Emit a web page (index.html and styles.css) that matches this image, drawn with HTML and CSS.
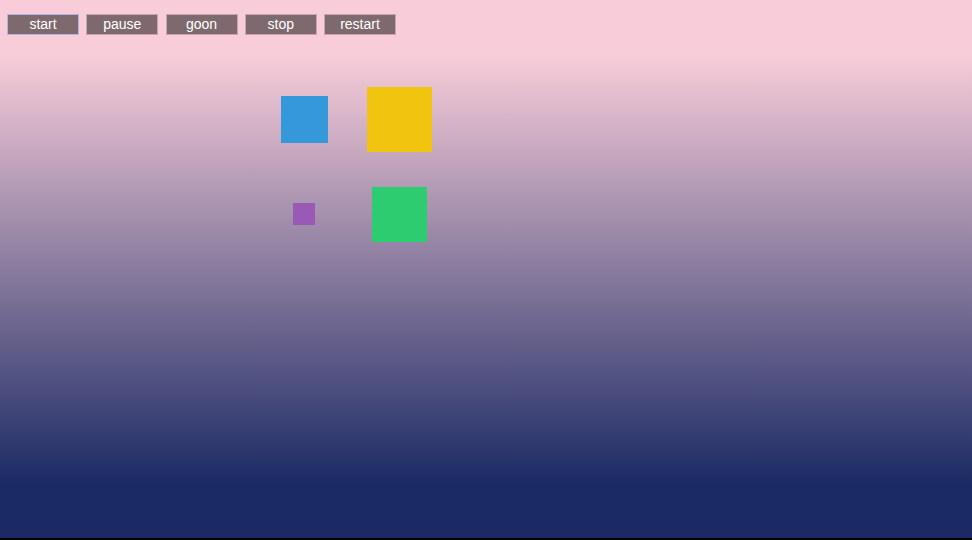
FILE: index.html
```html
<!DOCTYPE html>
<html>
<head>
<meta charset="utf-8">
<link rel="stylesheet" href="styles.css">
</head>
<body>
<div class="stage">
  <div class="controls">
    <button class="btn btn-focus">start</button>
    <button class="btn">pause</button>
    <button class="btn">goon</button>
    <button class="btn">stop</button>
    <button class="btn">restart</button>
  </div>
  <div class="grid">
    <div class="cell"><div class="box blue"></div></div>
    <div class="cell"><div class="box yellow"></div></div>
    <div class="cell"><div class="box purple"></div></div>
    <div class="cell"><div class="box green"></div></div>
  </div>
</div>
</body>
</html>
```
FILE: styles.css
```css
html, body {
  margin: 0;
  padding: 0;
  background: #000;
}
.stage {
  height: 538px;
  background: linear-gradient(to bottom, #f8cdd9 0, #f8cdd9 54px, #1b2a64 484px, #1b2a64 100%);
  font-family: "Liberation Sans", Arial, sans-serif;
  overflow: hidden;
}
.controls {
  display: flex;
  gap: 7.25px;
  padding: 14px 0 0 7px;
}
.btn {
  width: 72px;
  height: 21px;
  box-sizing: border-box;
  margin: 0;
  padding: 0;
  background: #7e6a6e;
  border: 1px solid #c9a4b0;
  color: #fff;
  font-family: "Liberation Sans", Arial, sans-serif;
  font-size: 14px;
  line-height: 19px;
}
.btn-focus {
  border-color: #b6b3e0;
}
.grid {
  display: grid;
  grid-template-columns: 95px 95px;
  grid-template-rows: 95px 95px;
  margin: 36.5px 0 0 256.5px;
}
.cell {
  display: flex;
  align-items: center;
  justify-content: center;
}
.box { flex: none; }
.blue { width: 47px; height: 47px; background: #3498db; }
.yellow { width: 65px; height: 65px; background: #f1c40f; }
.purple { width: 22px; height: 22px; background: #9b59b6; }
.green { width: 55px; height: 55px; background: #2ecc71; }
```
